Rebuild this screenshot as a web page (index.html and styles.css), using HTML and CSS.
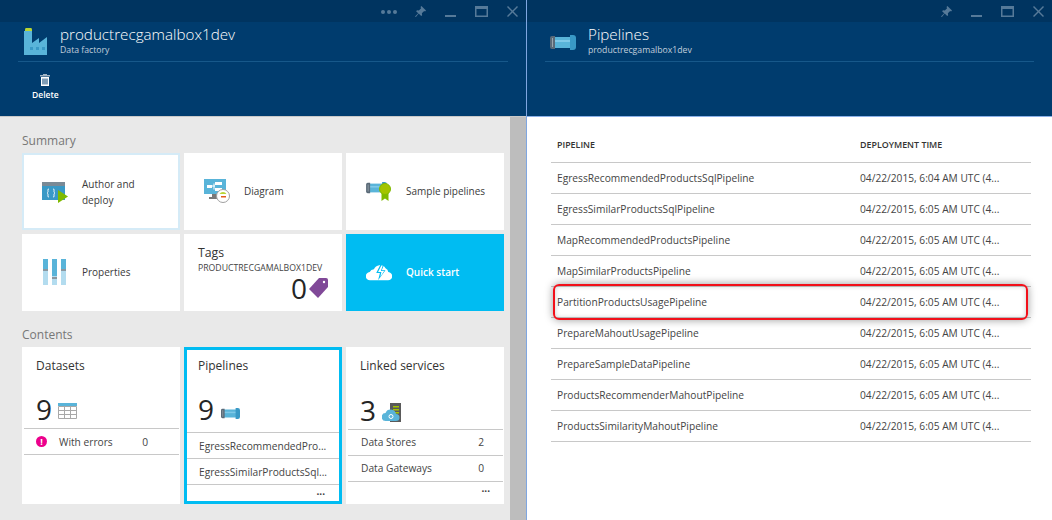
FILE: index.html
```html
<!DOCTYPE html>
<html>

<head>
    <title>Data factory</title>
    <link rel="stylesheet" href="styles.css">
</head>

<body>
    <svg class="defs" width="0" height="0">
        <symbol id="pipe" viewBox="0 0 26 15">
            <path d="M3 2h20v11H3z" fill="#59b4d9" />
            <path d="M3 5h20v2H3z" fill="#7fc9e8" />
            <path d="M2 1h3v13H2a2 2 0 0 1-2-2V3a2 2 0 0 1 2-2z" fill="#5a6a78" />
            <path d="M2 3h1v9H2z" fill="#9aa5ad" />
            <path d="M20 0h3a3 3 0 0 1 3 3v9a3 3 0 0 1-3 3h-3z" fill="#3999c6" />
        </symbol>
        <symbol id="pin" viewBox="0 0 12 12">
            <path d="M7 0l5 5-1 1-1-.5-2.500 2.500.3 2-1 1L4 8.200 1 12l-1-.5L3.500 8 1.200 5.700l1-1 2 .3L6.700 2.500 6 1z" />
        </symbol>
        <symbol id="min" viewBox="0 0 11 11">
            <path d="M0 9h11v2H0z" />
        </symbol>
        <symbol id="max" viewBox="0 0 13 11">
            <path fill-rule="evenodd" d="M0 0h13v11H0zM1.500 3v6.500h10V3z" />
        </symbol>
        <symbol id="close" viewBox="0 0 11 11">
            <path d="M1 0l4.500 4.500L10 0l1 1-4.500 4.500L11 10l-1 1-4.500-4.500L1 11l-1-1 4.500-4.500L0 1z" />
        </symbol>
    </svg>

    <div class="page">
        <section class="blade">
            <header class="head">
                <div class="topbar">
                    <span class="dots"><i></i><i></i><i></i></span>
                    <svg class="tb-icon"><use href="#pin" /></svg>
                    <svg class="tb-icon"><use href="#min" /></svg>
                    <svg class="tb-icon tb-max"><use href="#max" /></svg>
                    <svg class="tb-icon"><use href="#close" /></svg>
                </div>
                <div class="title-row">
                    <svg class="factory" viewBox="0 0 23 27">
                        <path d="M1 1.500a2.500 1.500 0 0 1 7 0V3H1z" fill="#b8d432" />
                        <path d="M0 3h8v12l7-5v5l8-6v18H0z" fill="#59b4d9" />
                        <path d="M6 19h3v3H6zM12 19h3v3h-3zM18 19h3v3h-3z" fill="#3999c6" />
                    </svg>
                    <div>
                        <h1 class="title">productrecgamalbox1dev</h1>
                        <p class="subtitle">Data factory</p>
                    </div>
                </div>
                <div class="cmdbar">
                    <button class="cmd">
                        <svg width="10" height="12" viewBox="0 0 10 12">
                            <path d="M3 0h4v1h3v1.500H0V1h3z" fill="#9fb3c4" />
                            <path fill-rule="evenodd" d="M1 3h8v9H1zM2.500 4.500v6h1v-6zM4.500 4.500v6h1v-6zM6.500 4.500v6h1v-6z" fill="#fff" />
                        </svg>
                        Delete
                    </button>
                </div>
            </header>

            <div class="blade-body">
                <div class="scroller">
                    <h2 class="group">Summary</h2>
                    <div class="tiles">
                        <div class="tile part selected">
                            <svg class="part-icon" viewBox="0 0 26 22">
                                <path d="M0 1h23v18H0z" fill="#3999c6" />
                                <path d="M0 1h23v4H0z" fill="#7a8a96" />
                                <path d="M7 8c-1.500 0-1 1-1 2.500 0 1-1 1.500-1 1.500s1 .5 1 1.500c0 1.500-.5 2.500 1 2.500M11 8c1.500 0 1 1 1 2.500 0 1 1 1.500 1 1.500s-1 .5-1 1.500c0 1.500.5 2.500-1 2.500" fill="none" stroke="#fff" />
                                <path d="M16 9l10 6.500L16 22z" fill="#7fba00" />
                            </svg>
                            <span class="part-text">Author and<br>deploy</span>
                        </div>
                        <div class="tile part">
                            <svg class="part-icon" viewBox="0 0 26 24">
                                <path d="M0 0h22v15H0z" fill="#59b4d9" />
                                <path d="M3 6h5v3H3zM11 3h7v3h-7zM11 9h7v3h-7z" fill="#fff" />
                                <path d="M8 7h3M10 4.500v6" stroke="#fff" fill="none" />
                                <path d="M8 15h6v3h3v2H5v-2h3z" fill="#7a7a7a" />
                                <circle cx="19" cy="17" r="6.500" fill="#fff" stroke="#a0a0a0" />
                                <path d="M15.500 15a4 4 0 0 1 7 0z" fill="#b8d432" />
                                <path d="M17 17h5v1.500h-5z" fill="#e25a1c" />
                            </svg>
                            <span class="part-text">Diagram</span>
                        </div>
                        <div class="tile part">
                            <svg class="part-icon" viewBox="0 0 26 22">
                                <use href="#pipe" width="21" height="12" x="0" y="2" />
                                <path d="M15.500 13h7v8l-3.500-2.500-3.500 2.500z" fill="#7fba00" />
                                <circle cx="19" cy="9" r="5.500" fill="#a4c400" stroke="#7fba00" />
                            </svg>
                            <span class="part-text">Sample pipelines</span>
                        </div>
                        <div class="tile part">
                            <svg class="part-icon" viewBox="0 0 24 26">
                                <path d="M0 0h5v26H0zM9 0h5v26H9zM18 0h5v26h-5z" fill="#b3dcef" />
                                <path d="M0 0h5v10H0zM9 0h5v17H9zM18 0h5v10h-5z" fill="#59b4d9" />
                                <path d="M0 10h5v2H0zM9 18h5v2H9zM18 10h5v2h-5z" fill="#8a97a0" />
                            </svg>
                            <span class="part-text">Properties</span>
                        </div>
                        <div class="tile tags">
                            <div class="tile-title">Tags</div>
                            <div class="tags-name">PRODUCTRECGAMALBOX1DEV</div>
                            <div class="tags-count">
                                <span class="big">0</span>
                                <svg width="19" height="20" viewBox="0 0 19 20">
                                    <path d="M10 0h7a2 2 0 0 1 2 2v7L9 20 0 11z" fill="#804998" />
                                    <circle cx="15" cy="4" r="1.200" fill="#fff" />
                                </svg>
                            </div>
                        </div>
                        <div class="tile part quick">
                            <svg class="part-icon" viewBox="0 0 28 18">
                                <path d="M4.500 18a4.500 4.500 0 0 1-.5-9 5 5 0 0 1 4.500-3A7 7 0 0 1 21 5a5 5 0 0 1 3 4 4.500 4.500 0 0 1-.5 9z" fill="#fff" />
                                <path d="M16 0l-5 10h4l-2 8 8-11h-4l3-7z" fill="#00bcf2" />
                                <path d="M16.500 2l-3.500 7h3.500l-1 5 4-6h-3.500l2-6z" fill="#fff" />
                            </svg>
                            <span class="part-text">Quick start</span>
                        </div>
                    </div>

                    <h2 class="group group-contents">Contents</h2>
                    <div class="tiles">
                        <div class="tile col">
                            <div class="col-title">Datasets</div>
                            <div class="col-stat">
                                <span class="big">9</span>
                                <svg width="19" height="16" viewBox="0 0 19 16">
                                    <path d="M0 0h19v3H0z" fill="#59b4d9" />
                                    <path d="M.5 3.500h18v12H.5zM.5 7.500h18M.5 11.500h18M6.500 3.500v12M12.500 3.500v12" fill="#fff" stroke="#a8a8a8" />
                                </svg>
                            </div>
                            <div class="rows">
                                <div class="row">
                                    <span class="err">!</span>
                                    <span class="row-label">With errors</span>
                                    <span class="row-val">0</span>
                                </div>
                            </div>
                        </div>
                        <div class="tile col active">
                            <div class="col-title">Pipelines</div>
                            <div class="col-stat">
                                <span class="big">9</span>
                                <svg class="stat-pipe" width="19" height="11"><use href="#pipe" /></svg>
                            </div>
                            <div class="rows">
                                <div class="row"><span class="row-name">EgressRecommendedPro...</span></div>
                                <div class="row"><span class="row-name">EgressSimilarProductsSql...</span></div>
                            </div>
                            <div class="more">...</div>
                        </div>
                        <div class="tile col linked">
                            <div class="col-title">Linked services</div>
                            <div class="col-stat">
                                <span class="big">3</span>
                                <svg width="20" height="19" viewBox="0 0 20 19">
                                    <path d="M8 0h11v19H8z" fill="#5a5a5a" />
                                    <path d="M11 3h6v1.500h-6zM11 6h6v1.500h-6zM11 9h6v1.500h-6z" fill="#a4c400" />
                                    <path d="M4 18a4 4 0 0 1-.5-8A5.500 5.500 0 0 1 14 11a3.500 3.500 0 0 1 0 7z" fill="#59b4d9" />
                                    <circle cx="9" cy="13.500" r="2" fill="none" stroke="#fff" />
                                </svg>
                            </div>
                            <div class="rows">
                                <div class="row"><span class="row-label">Data Stores</span><span class="row-val">2</span></div>
                                <div class="row"><span class="row-label">Data Gateways</span><span class="row-val">0</span></div>
                            </div>
                            <div class="more">...</div>
                        </div>
                    </div>
                </div>
                <div class="scrollbar"></div>
            </div>
        </section>

        <section class="blade blade-list">
            <header class="head">
                <div class="topbar">
                    <svg class="tb-icon"><use href="#pin" /></svg>
                    <svg class="tb-icon"><use href="#min" /></svg>
                    <svg class="tb-icon tb-max"><use href="#max" /></svg>
                    <svg class="tb-icon"><use href="#close" /></svg>
                </div>
                <div class="title-row">
                    <svg class="head-pipe" width="26" height="15"><use href="#pipe" /></svg>
                    <div>
                        <h1 class="title">Pipelines</h1>
                        <p class="subtitle">productrecgamalbox1dev</p>
                    </div>
                </div>
            </header>

            <div class="list-body">
                <table class="grid">
                    <thead>
                        <tr>
                            <th class="c-name">PIPELINE</th>
                            <th>DEPLOYMENT TIME</th>
                        </tr>
                    </thead>
                    <tbody>
                        <tr><td>EgressRecommendedProductsSqlPipeline</td><td>04/22/2015, 6:04 AM UTC (4...</td></tr>
                        <tr><td>EgressSimilarProductsSqlPipeline</td><td>04/22/2015, 6:05 AM UTC (4...</td></tr>
                        <tr><td>MapRecommendedProductsPipeline</td><td>04/22/2015, 6:05 AM UTC (4...</td></tr>
                        <tr><td>MapSimilarProductsPipeline</td><td>04/22/2015, 6:05 AM UTC (4...</td></tr>
                        <tr><td>PartitionProductsUsagePipeline</td><td>04/22/2015, 6:05 AM UTC (4...</td></tr>
                        <tr><td>PrepareMahoutUsagePipeline</td><td>04/22/2015, 6:05 AM UTC (4...</td></tr>
                        <tr><td>PrepareSampleDataPipeline</td><td>04/22/2015, 6:05 AM UTC (4...</td></tr>
                        <tr><td>ProductsRecommenderMahoutPipeline</td><td>04/22/2015, 6:05 AM UTC (4...</td></tr>
                        <tr><td>ProductsSimilarityMahoutPipeline</td><td>04/22/2015, 6:05 AM UTC (4...</td></tr>
                    </tbody>
                </table>
                <div class="callout"></div>
            </div>
        </section>
    </div>
</body>

</html>
```

FILE: styles.css
```css
* {
    box-sizing: border-box;
}

body {
    margin: 0;
    font-family: "Open Sans", "Noto Sans", sans-serif;
    color: #333;
    overflow: hidden;
}

.defs {
    display: block;
    height: 0;
}

.page {
    display: flex;
    width: 1052px;
    height: 520px;
}

.blade {
    width: 526px;
    flex: none;
    display: flex;
    flex-direction: column;
}

.blade-list {
    width: 526px;
    border-left: 1px solid #7fa6e0;
}

/* header */
.head {
    height: 117px;
    flex: none;
    background: #003c6e;
    border-bottom: 1px solid #c9c9c9;
}

.blade-list .head {
    border-bottom: 1px solid #8ab0e8;
}

.topbar {
    height: 22px;
    background: #003460;
    display: flex;
    align-items: center;
    justify-content: flex-end;
    gap: 19px;
    padding-right: 8px;
    padding-top: 1px;
}

.dots {
    display: flex;
    gap: 2px;
    margin-right: -1px;
}

.dots i {
    width: 4px;
    height: 4px;
    border-radius: 2px;
    background: #567a99;
}

.tb-icon {
    width: 11px;
    height: 11px;
    fill: #567a99;
}

.tb-max {
    width: 13px;
}

.title-row {
    height: 40px;
    margin: 0 18px;
    border-bottom: 1px solid #17588a;
    display: flex;
    align-items: flex-start;
    padding-left: 6px;
}

.factory {
    width: 23px;
    height: 27px;
    margin: 6px 13px 0 0;
}

.title {
    margin: 1px 0 0;
    font-size: 15.200px;
    font-weight: 300;
    line-height: 22px;
    color: #fff;
}

.subtitle {
    margin: 0;
    font-size: 8.700px;
    line-height: 11px;
    color: #c0cfdc;
}

.blade-list .title-row {
    padding-left: 5px;
}

.head-pipe {
    margin: 13px 12px 0 0;
}

.cmdbar {
    padding: 12px 0 0 32px;
}

.cmd {
    display: flex;
    flex-direction: column;
    align-items: center;
    gap: 3px;
    padding: 0;
    border: none;
    background: none;
    font-family: inherit;
    font-size: 8.500px;
    font-weight: 600;
    line-height: 11px;
    color: #fff;
}

/* left body */
.blade-body {
    flex: 1;
    display: flex;
    min-height: 0;
}

.scroller {
    width: 510px;
    background: #e9e9e9;
    padding: 0 0 0 22px;
}

.scrollbar {
    width: 16px;
    background: #bdbdbd;
}

.group {
    margin: 16px 0 5px;
    font-size: 12px;
    font-weight: 400;
    line-height: 15px;
    color: #777;
}

.group-contents {
    margin: 16px 0 5px;
}

.tiles {
    display: grid;
    grid-template-columns: repeat(3, 158px);
    gap: 4px;
}

.tile {
    background: #fff;
    height: 77px;
    font-size: 10px;
    color: #3a3a3a;
}

.part {
    display: flex;
    align-items: center;
    padding: 0 0 2px 20px;
}

.part-icon {
    width: 26px;
    height: 26px;
    flex: none;
    margin-right: 14px;
}

.part-text {
    line-height: 16px;
}

.selected {
    border: 2px solid #d5ebf7;
    padding: 0 0 0 18px;
}

.tags {
    padding: 11px 14px 0;
}

.tile-title {
    font-size: 12.300px;
    line-height: 16px;
    color: #333;
}

.tags-name {
    font-size: 8.700px;
    line-height: 12px;
    margin-top: 1px;
    color: #444;
    white-space: nowrap;
}

.tags-count {
    display: flex;
    justify-content: flex-end;
    align-items: center;
    gap: 2px;
    margin-top: 1px;
}

.tags-count .big {
    line-height: 26px;
}

.big {
    font-size: 28px;
    font-weight: 400;
    line-height: 30px;
    color: #252525;
}

.quick {
    background: #00bcf2;
    color: #fff;
    font-weight: 600;
}

/* content tiles */
.col {
    height: 157px;
    padding-top: 9px;
}

.col-title {
    font-size: 12px;
    line-height: 20px;
    color: #333;
    padding-left: 14px;
}

.col-stat {
    display: flex;
    align-items: flex-end;
    gap: 6px;
    height: 30px;
    margin: 18px 0 4px;
    padding-left: 14px;
}

.col-stat svg {
    margin-bottom: 5px;
}

.rows {
    margin: 0 1px 0 2px;
    border-top: 1px solid #c8c8c8;
}

.row {
    display: flex;
    align-items: center;
    height: 26px;
    border-bottom: 1px solid #c8c8c8;
    padding: 0 31px 0 12px;
    font-size: 10.200px;
    color: #444;
}

.row-label {
    flex: 1;
}

.row-name {
    white-space: nowrap;
}

.err {
    width: 11px;
    height: 11px;
    border-radius: 50%;
    background: #ec008c;
    color: #fff;
    font-size: 9px;
    font-weight: 700;
    line-height: 11px;
    text-align: center;
    margin-right: 12px;
}

.more {
    text-align: right;
    font-size: 10px;
    line-height: 12px;
    padding-right: 14px;
    font-weight: 700;
}

.active {
    border: 3px solid #00bcf2;
    padding-top: 6px;
}

.active .col-title,
.active .col-stat {
    padding-left: 11px;
}

.active .rows {
    margin: 8px 0 0;
}

.active .row {
    padding: 0 0 0 12px;
}

.stat-pipe {
    margin-left: 1px;
}

.linked .col-stat {
    margin-top: 19px;
}

.linked .col-stat svg {
    margin-bottom: 3px;
}

.linked .row {
    padding: 0 19px 2px 13px;
}

/* right list */
.list-body {
    flex: 1;
    background: #fff;
    position: relative;
    padding: 16px 20px 0 24px;
}

.grid {
    width: 480px;
    border-collapse: collapse;
    table-layout: fixed;
}

.grid th {
    height: 29px;
    padding: 0 0 6px 6px;
    text-align: left;
    font-size: 8.900px;
    font-weight: 600;
    color: #333;
    border-bottom: 1px solid #c8c8c8;
}

.grid th.c-name {
    width: 303px;
}

.grid td {
    height: 31px;
    padding: 0 0 0 6px;
    font-size: 10.200px;
    color: #444;
    border-bottom: 1px solid #c8c8c8;
    white-space: nowrap;
}

.callout {
    position: absolute;
    left: 26px;
    top: 167px;
    width: 475px;
    height: 36px;
    border: 2px solid #f2101a;
    border-radius: 6px;
    box-shadow: 0 0 8px rgba(0, 0, 0, 0.4), inset 0 0 5px rgba(0, 0, 0, 0.2);
}
```
